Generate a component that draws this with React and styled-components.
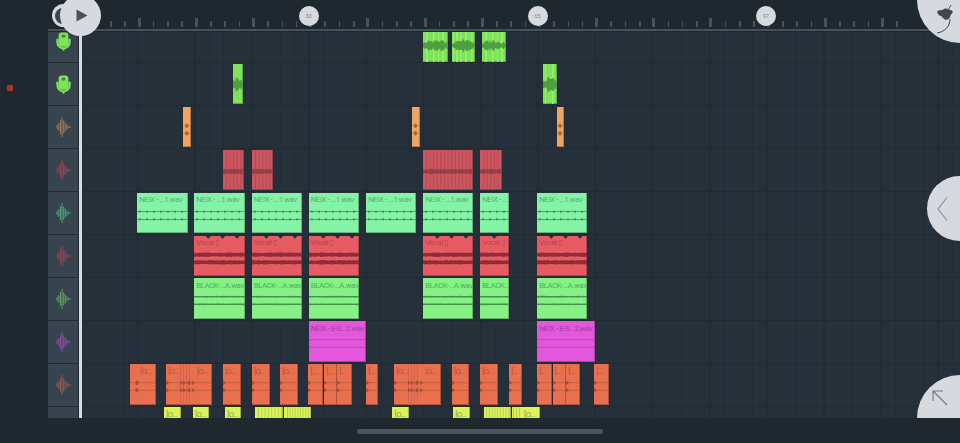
import React from "react";
import styled, { createGlobalStyle } from "styled-components";

const LANE_LEFT = 82;
const ROW_H = 42.9;

const GlobalStyle = createGlobalStyle`
  html, body {
    margin: 0;
    padding: 0;
    background: #20282f;
    overflow: hidden;
  }
  * { box-sizing: border-box; }
`;

const KINDS = {
  lime: { bg: "#7fe35a", ink: "#4b9e3c", wave: "#4f9f40", stripe: "#96ec70" },
  orange: { bg: "#f2a45f", ink: "#a56a3f", wave: "#a0683f", stripe: "#f2a45f" },
  crimson: { bg: "#cb5660", ink: "#8c3b44", wave: "#963f49", stripe: "#a5444e" },
  mint: { bg: "#85f3a5", ink: "#5aac80", wave: "#3f8a60", stripe: "#85f3a5" },
  coral: { bg: "#e75c63", ink: "#b8434e", wave: "#8e2c38", stripe: "#e75c63" },
  green: { bg: "#86f286", ink: "#56a95f", wave: "#46914d", stripe: "#86f286" },
  pink: { bg: "#e357dc", ink: "#a340a1", wave: "#9c3b9a", stripe: "#e357dc" },
  salmon: { bg: "#e9704f", ink: "#ab5340", wave: "#a9503a", stripe: "#d5654a" },
  yellow: { bg: "#dcf25c", ink: "#8f9f3c", wave: "#8f9f3c", stripe: "#bdd24e" },
};

const Page = styled.div`
  width: 960px;
  height: 443px;
  position: relative;
  overflow: hidden;
  display: flex;
  flex-direction: column;
  background: #20282f;
  font-family: Roboto, "DejaVu Sans", sans-serif;
`;

const Top = styled.div`
  display: flex;
  flex: none;
`;

const Gutter = styled.aside`
  width: 48px;
  flex: none;
  padding: 85px 0 0 7px;
  background: #20282f;
`;

const Marker = styled.div`
  width: 6px;
  height: 6px;
  background: #a5391f;
`;

const Main = styled.main`
  flex: 1;
  min-width: 0;
`;

const Ruler = styled.header`
  height: 31px;
  margin-bottom: 1px;
  padding: 0 0 2px 62px;
  display: flex;
  align-items: flex-end;
  border-bottom: 2px solid #46515b;
  background: #20282f;
`;

const TickCell = styled.div`
  width: 14.3px;
  flex: none;
  display: flex;
  justify-content: flex-start;
`;

const Tick = styled.div`
  width: ${(p) => (p.$major ? 3 : 1.6)}px;
  height: ${(p) => (p.$major ? 9.5 : 6)}px;
  margin-left: ${(p) => (p.$major ? -1 : 0)}px;
  background: #47525c;
`;

const Bubble = styled.div`
  position: absolute;
  top: 6px;
  width: 20px;
  height: 20px;
  margin-left: -10px;
  border-radius: 50%;
  background: #d6dade;
  color: #7b838b;
  font-size: 5.5px;
  display: flex;
  align-items: center;
  justify-content: center;
`;

const Rows = styled.div`
  position: relative;
  overflow: hidden;
`;

const Row = styled.div`
  height: ${(p) => p.$height}px;
  display: flex;
  border-bottom: ${(p) => (p.$last ? 0 : 1)}px solid #212a32;
`;

const TrackHead = styled.div`
  width: 30px;
  flex: none;
  margin-right: 4px;
  overflow: hidden;
  display: flex;
  align-items: flex-end;
  background: #37444f;
`;

const IconCell = styled.div`
  width: 100%;
  height: ${ROW_H - 1}px;
  flex: none;
  display: flex;
  align-items: center;
  justify-content: center;
`;

const Lane = styled.div`
  position: relative;
  flex: 1;
  overflow: hidden;
  background-color: #25303a;
  background-image:
    linear-gradient(to right, #202931 1px, transparent 1px),
    linear-gradient(to right, #222c34 1px, transparent 1px);
  background-size: 57.2px 100%, 14.3px 100%;
  background-position: 55.3px 0, 12.4px 0;
`;

const Clip = styled.div`
  position: absolute;
  top: ${(p) => p.$offset}px;
  height: 40.5px;
  overflow: hidden;
  background: ${(p) => KINDS[p.$kind].bg};
  box-shadow: inset -1px -1px 0 rgba(0, 0, 0, 0.25);
`;

const ClipArt = styled.svg`
  position: absolute;
  inset: 0;
  display: block;
`;

const ClipLabel = styled.span`
  position: absolute;
  top: 2.5px;
  left: 2.2px;
  white-space: nowrap;
  font-size: 7.8px;
  letter-spacing: -0.4px;
  line-height: 10px;
  color: ${(p) => KINDS[p.$kind].ink};
`;

const Playhead = styled.div`
  position: absolute;
  left: 31px;
  top: 0;
  bottom: 0;
  width: 2.6px;
  background: #d8dcdf;
`;

const GhostButton = styled.div`
  position: absolute;
  left: 52px;
  top: 4px;
  width: 23px;
  height: 23px;
  border-radius: 50%;
  background: #d6dade;
  overflow: hidden;

  &::before {
    content: "";
    position: absolute;
    left: 3px;
    top: 3.5px;
    width: 16px;
    height: 16px;
    border-radius: 50%;
    background: #3c4650;
  }
`;

const PlayButton = styled.button`
  position: absolute;
  left: 60px;
  top: -5px;
  width: 41px;
  height: 41px;
  padding: 0 0 0 2px;
  border: 0;
  border-radius: 50%;
  background: #d6dade;
  display: flex;
  align-items: center;
  justify-content: center;
`;

const CornerDisc = styled.div`
  position: absolute;
  width: 86px;
  height: 86px;
  border-radius: 50%;
  background: #d6dade;
  display: flex;
  align-items: flex-start;
`;

const LogoDisc = styled(CornerDisc)`
  left: 917px;
  top: -43px;
  padding: 47px 0 0 19px;
`;

const ZoomDisc = styled(CornerDisc)`
  right: -43px;
  bottom: -43px;
  padding: 15px 0 0 15px;
`;

const SideTab = styled.div`
  position: absolute;
  right: -32px;
  top: 144px;
  width: 65px;
  height: 65px;
  padding-left: 10px;
  border-radius: 50%;
  background: #d6dade;
  display: flex;
  align-items: center;
`;

const Footer = styled.footer`
  flex: 1;
  padding-top: 11.5px;
  display: flex;
  justify-content: center;
`;

const ScrollBar = styled.div`
  width: 246px;
  height: 5px;
  border-radius: 3px;
  background: #4c555d;
`;

// hash noise, keeps the wave forms the same between renders
const hash = (i, seed) => {
  const v = Math.sin(i * 12.9898 + seed * 78.233) * 43758.5453;
  return v - Math.floor(v);
};

const wavePath = (width, cy, ampAt) => {
  const top = [];
  const bottom = [];
  for (let x = 0; x <= width + 0.5; x += 1) {
    const a = ampAt(x);
    top.push(`${x} ${(cy - a).toFixed(1)}`);
    bottom.unshift(`${x} ${(cy + a).toFixed(1)}`);
  }
  return `M${top.join("L")}L${bottom.join("L")}Z`;
};

const Art = ({ kind, width, clip, seed }) => {
  const c = KINDS[kind];
  const stripes = clip.stripes || [];
  const lines = [];
  if (clip.wave === "beads") {
    [18.7, 26.3].forEach((y) => {
      lines.push(
        <path key={y} d={wavePath(width, y, (x) => (Math.round(x) % 7 === 3 ? 1.5 : 0.45))} fill={c.wave} />
      );
    });
  }
  if (clip.wave === "fuzz") {
    [18.7, 26.3].forEach((y, i) => {
      lines.push(
        <path key={y} d={wavePath(width, y, (x) => clip.amp * (0.65 + 0.35 * hash(x, seed + i)))} fill={c.wave} />
      );
    });
  }
  if (clip.wave === "band") {
    lines.push(<path key="band" d={wavePath(width, 21.5, (x) => 1.6 + hash(x, seed) * 1.2)} fill={c.wave} />);
  }
  if (clip.wave === "blob") {
    const cy = clip.cy || 20.5;
    lines.push(
      <path
        key="blob"
        d={wavePath(width, cy, (x) => clip.amp * (0.5 + 0.5 * Math.sin((x / width) * Math.PI)) * (0.3 + 0.7 * hash(x, seed)))}
        fill={c.wave}
      />
    );
  }
  return (
    <ClipArt width={width} height="41" viewBox={`0 0 ${width} 41`}>
      {stripes.map(([x, w], i) => (
        <rect key={i} x={x} y="0" width={w} height="41" fill={c.stripe} opacity={kind === "crimson" ? 0.6 : 1} />
      ))}
      {lines}
      {(clip.notes || []).map((x, i) => (
        <polygon key={`n${i}`} points={`${x - 2.6},0 ${x + 2.6},0 ${x},2.8`} fill="#25303a" />
      ))}
      {clip.rails && (
        <g stroke={c.wave} strokeWidth="0.6">
          <line x1="0" x2={width} y1="18.7" y2="18.7" />
          <line x1="0" x2={width} y1="26.3" y2="26.3" />
        </g>
      )}
      {(clip.marks || []).map((x, i) => (
        <g key={`m${i}`} fill={c.wave}>
          <polygon points={`${x},16.2 ${x + 3.2},18.7 ${x},21.2`} />
          <polygon points={`${x},23.8 ${x + 3.2},26.3 ${x},28.8`} />
        </g>
      ))}
      {(clip.dots || []).map((x, i) => (
        <g key={`d${i}`} fill={c.wave}>
          <ellipse cx={x} cy="18.7" rx="1.6" ry="2.2" />
          <ellipse cx={x} cy="26.3" rx="1.6" ry="2.2" />
        </g>
      ))}
    </ClipArt>
  );
};

const WaveIcon = ({ color }) => (
  <svg width="15" height="20" viewBox="0 0 15 20">
    <path
      d="M0.6 8h1.2v4H0.6zM2.3 6h1.2v8H2.3zM4 3h1.1v14H4zM5.5 0h1.1v20H5.5zM7.1 3.5h1.1v13H7.1zM8.7 5.5h1.1v9H8.7zM10.3 7.5h1.1v5h-1.1zM11.8 8.8h1.1v2.4h-1.1zM13 9.5H15v1h-2z"
      fill={color}
    />
  </svg>
);

const MicIcon = () => (
  <svg width="15" height="19" viewBox="0 0 14 18">
    <path d="M1 6.5v3.2a6 6 0 0 0 12 0V6.5" fill="#5cb446" stroke="#7fe35a" strokeWidth="1.6" />
    <rect x="2.4" y="0.4" width="9.2" height="13.2" rx="3" fill="#7fe35a" />
    <rect x="5.4" y="2.6" width="3.2" height="2.6" fill="#3f7f35" />
    <rect x="6" y="15" width="2" height="2.6" fill="#7fe35a" />
  </svg>
);

const stripeRun = (from, to, step) => {
  const out = [];
  for (let x = from; x < to; x += step) out.push([x, 1]);
  return out;
};

const NEIX = "NEiX - ...1.wav";
const BLACK = "BLACK-...A.wav";
const VOCAL = "Vocal ▯";
const ES = "NEiX - E-S...2.wav";

const wide = [194, 244.5];
const wide2 = [251.5, 302];
const wide3 = [308.5, 359];
const wide4 = [423, 473];
const cut = [480, 509];
const wide5 = [537, 587];

const limeStripes = [[3, 2], [10, 1.5], [15, 1], [19, 2]];
const pairStripes = [[14, 1], [17, 1], [20, 1], [23, 1]];

const TRACKS = [
  {
    icon: "mic",
    kind: "lime",
    height: 31.4,
    offset: -10.5,
    clips: [
      { span: [423, 448.3], wave: "blob", cy: 23.5, amp: 7, stripes: limeStripes },
      { span: [451.5, 474.5], wave: "blob", cy: 23.5, amp: 7, stripes: [[1, 1], [4, 2], [8, 1.5], [13, 2], [19, 1.5]] },
      { span: [482, 505.5], wave: "blob", cy: 23.5, amp: 7, stripes: limeStripes },
    ],
  },
  {
    icon: "mic",
    kind: "lime",
    clips: [
      { span: [233.3, 243], wave: "blob", amp: 8 },
      { span: [543.3, 557.5], wave: "blob", amp: 9, stripes: [[2, 1], [9, 1.5]] },
    ],
  },
  {
    color: "#9b7358",
    kind: "orange",
    clips: [
      { span: [183.3, 191], dots: [3.8], rails: true },
      { span: [411.7, 420], dots: [3.4], rails: true },
      { span: [556.7, 564.5], dots: [3], rails: true },
    ],
  },
  {
    color: "#8d4652",
    kind: "crimson",
    clips: [
      { span: [222.7, 244.5], wave: "band", stripes: stripeRun(3, 21, 3.6) },
      { span: [251.5, 273], wave: "band", stripes: stripeRun(3, 21, 3.6) },
      { span: [423, 473], wave: "band", stripes: stripeRun(3, 50, 3.6) },
      { span: [480, 502], wave: "band", stripes: stripeRun(3, 21, 3.6) },
    ],
  },
  {
    color: "#4f9a74",
    kind: "mint",
    clips: [[137, 188], wide, wide2, wide3, [366, 416], wide4, cut, wide5].map((span) => ({
      span,
      label: span === cut ? "NEiX - ..." : NEIX,
      wave: "beads",
    })),
  },
  {
    color: "#8d4652",
    kind: "coral",
    clips: [wide, wide2, wide3, wide4, cut, wide5].map((span) => ({
      span,
      label: VOCAL,
      wave: "fuzz",
      amp: 2.3,
      notes: span === cut ? [14.3] : [14.3, 28.6, 43],
    })),
  },
  {
    color: "#5a9a64",
    kind: "green",
    clips: [wide, wide2, wide3, wide4, cut, wide5].map((span) => ({
      span,
      label: span === cut ? "BLACK..." : BLACK,
      wave: "fuzz",
      amp: 0.9,
    })),
  },
  {
    color: "#8c4b9b",
    kind: "pink",
    clips: [[308.5, 366], [537, 595]].map((span) => ({ span, label: ES, rails: true })),
  },
  {
    color: "#8d5650",
    kind: "salmon",
    clips: [
      { span: [130, 155.6], label: "[O...", at: 10, dots: [7], rails: true },
      { span: [166, 212], label: "[O...", extra: { text: "[O...", at: 31 }, rails: true, marks: [0, 14, 17, 26], dots: [23], stripes: pairStripes },
      { span: [222.7, 241], label: "[O...", rails: true, marks: [0] },
      { span: [251.7, 269.7], label: "[O...", rails: true, marks: [0] },
      { span: [280, 298], label: "[O...", rails: true, marks: [0] },
      { span: [308.3, 323], label: "[...", rails: true, marks: [0] },
      { span: [324, 337.3], label: "[...", rails: true, marks: [0] },
      { span: [337.3, 351.7], label: "[...", rails: true, marks: [0] },
      { span: [366, 378], label: "[...", rails: true, marks: [0] },
      { span: [394, 441], label: "[O...", extra: { text: "[O...", at: 31 }, rails: true, marks: [0, 14, 17, 26], dots: [23], stripes: pairStripes },
      { span: [451.7, 469.3], label: "[O...", rails: true, marks: [0] },
      { span: [480, 498], label: "[O...", rails: true, marks: [0] },
      { span: [509, 522], label: "[...", rails: true, marks: [0] },
      { span: [537.3, 552], label: "[...", rails: true, marks: [0] },
      { span: [552.6, 566], label: "[...", rails: true, marks: [0] },
      { span: [566, 580], label: "[...", rails: true, marks: [0] },
      { span: [594.3, 609], label: "[...", rails: true, marks: [0] },
    ],
  },
  {
    kind: "yellow",
    height: 11,
    last: true,
    clips: [
      { span: [164, 181], label: "[O..." },
      { span: [192.7, 209], label: "[O..." },
      { span: [225, 241], label: "[O..." },
      { span: [255, 283], stripes: stripeRun(3, 28, 3.3) },
      { span: [284, 311], stripes: stripeRun(3, 27, 2.6) },
      { span: [392.3, 409.3], label: "[O..." },
      { span: [453, 470], label: "[O..." },
      { span: [483.7, 511], stripes: stripeRun(2, 27, 2.8) },
      { span: [512, 540], label: "[O...", at: 12, stripes: stripeRun(1, 10, 3) },
    ],
  },
];

const TICKS = Array.from({ length: 56 }, (_, i) => i);
const BARS = [
  { n: 33, x: 308.6 },
  { n: 65, x: 537.5 },
  { n: 97, x: 766 },
];

const App = () => (
  <Page>
    <GlobalStyle />
    <Top>
      <Gutter>
        <Marker />
      </Gutter>
      <Main>
        <Ruler>
          {TICKS.map((i) => (
            <TickCell key={i}>
              <Tick $major={i % 4 === 2} />
            </TickCell>
          ))}
        </Ruler>
        <Rows>
          {TRACKS.map((track, t) => (
            <Row key={t} $height={track.height || ROW_H} $last={track.last}>
              <TrackHead>
                {!track.last && (
                  <IconCell>{track.icon === "mic" ? <MicIcon /> : <WaveIcon color={track.color} />}</IconCell>
                )}
              </TrackHead>
              <Lane>
                {track.clips.map((clip, i) => {
                  const width = clip.span[1] - clip.span[0];
                  return (
                    <Clip
                      key={i}
                      $kind={track.kind}
                      $offset={track.offset ?? 0.6}
                      style={{ left: clip.span[0] - LANE_LEFT, width }}
                    >
                      <Art kind={track.kind} width={width} clip={clip} seed={t * 31 + i + 1} />
                      {clip.label && (
                        <ClipLabel $kind={track.kind} style={clip.at ? { left: clip.at } : undefined}>
                          {clip.label}
                        </ClipLabel>
                      )}
                      {clip.extra && (
                        <ClipLabel $kind={track.kind} style={{ left: clip.extra.at }}>
                          {clip.extra.text}
                        </ClipLabel>
                      )}
                    </Clip>
                  );
                })}
              </Lane>
            </Row>
          ))}
          <Playhead />
          <SideTab>
            <svg width="11" height="26" viewBox="0 0 11 26">
              <path d="M10 1.5 1 13l9 11.5" fill="none" stroke="#868e96" strokeWidth="1.1" />
            </svg>
          </SideTab>
          <ZoomDisc>
            <svg width="16" height="16" viewBox="0 0 16 16">
              <path d="M1 1l14 14M1 11V1h10" fill="none" stroke="#6e767e" strokeWidth="1.1" />
            </svg>
          </ZoomDisc>
        </Rows>
      </Main>
    </Top>
    <Footer>
      <ScrollBar />
    </Footer>
    {BARS.map((b) => (
      <Bubble key={b.n} style={{ left: b.x }}>
        {b.n}
      </Bubble>
    ))}
    <GhostButton />
    <PlayButton aria-label="Play">
      <svg width="12" height="13" viewBox="0 0 12 13">
        <path d="M0.5 0.5 11.5 6.5 0.5 12.5Z" fill="#4a545d" />
      </svg>
    </PlayButton>
    <LogoDisc>
      <svg width="20" height="30" viewBox="0 0 20 30">
        <path
          d="M1 8C3 5 6 7 8 5c2-1 4 0 5 1 2-1 3 1 4 2-1 2-3 3-3 5-1 3-3 2-4 3-3-1-4-4-5-4-2 0-3-2-4-4Z"
          fill="#3d4852"
        />
        <path d="M15 1c-1 2-2 3-3 5M14 15c0 7-5 13-13 14" fill="none" stroke="#3d4852" strokeWidth="1" />
      </svg>
    </LogoDisc>
  </Page>
);

export default App;
